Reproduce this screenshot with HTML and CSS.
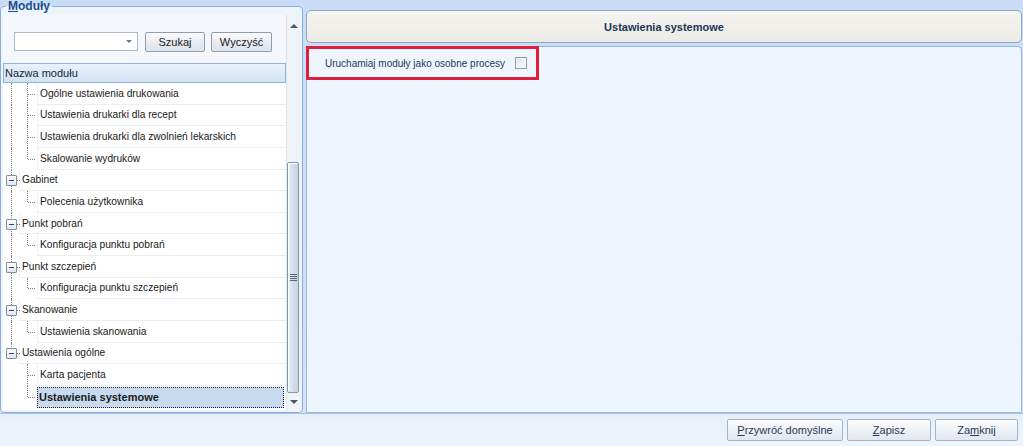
FILE: index.html
```html
<!DOCTYPE html>
<html lang="pl">
<head>
<meta charset="utf-8">
<title>Moduły</title>
<link rel="stylesheet" href="styles.css">
</head>
<body>
<div class="window">
  <div class="main">
    <fieldset class="modgroup">
      <legend><u>M</u>oduły</legend>
      <div class="scrollarea">
        <div class="pane">
          <div class="search">
            <div class="combo"><span class="caret"></span></div>
            <button class="btn btn-szukaj">Szukaj</button>
            <button class="btn btn-wyczysc">Wyczyść</button>
          </div>
          <div class="tree-head">Nazwa modułu</div>
          <div class="tree">
            <div class="row"><span class="ind trunk"></span><span class="ind branch"></span><span class="cell">Ogólne ustawienia drukowania</span></div>
            <div class="row"><span class="ind trunk"></span><span class="ind branch"></span><span class="cell">Ustawienia drukarki dla recept</span></div>
            <div class="row"><span class="ind trunk"></span><span class="ind branch"></span><span class="cell">Ustawienia drukarki dla zwolnień lekarskich</span></div>
            <div class="row"><span class="ind trunk"></span><span class="ind branch last"></span><span class="cell">Skalowanie wydruków</span></div>
            <div class="row node-row"><span class="ind node"><span class="box"></span></span><span class="cell">Gabinet</span></div>
            <div class="row"><span class="ind trunk"></span><span class="ind branch last"></span><span class="cell">Polecenia użytkownika</span></div>
            <div class="row node-row"><span class="ind node"><span class="box"></span></span><span class="cell">Punkt pobrań</span></div>
            <div class="row"><span class="ind trunk"></span><span class="ind branch last"></span><span class="cell">Konfiguracja punktu pobrań</span></div>
            <div class="row node-row"><span class="ind node"><span class="box"></span></span><span class="cell">Punkt szczepień</span></div>
            <div class="row"><span class="ind trunk"></span><span class="ind branch last"></span><span class="cell">Konfiguracja punktu szczepień</span></div>
            <div class="row node-row"><span class="ind node"><span class="box"></span></span><span class="cell">Skanowanie</span></div>
            <div class="row"><span class="ind trunk"></span><span class="ind branch last"></span><span class="cell">Ustawienia skanowania</span></div>
            <div class="row node-row"><span class="ind node end"><span class="box"></span></span><span class="cell">Ustawienia ogólne</span></div>
            <div class="row"><span class="ind blank"></span><span class="ind branch"></span><span class="cell">Karta pacjenta</span></div>
            <div class="row"><span class="ind blank"></span><span class="ind branch last"></span><span class="cell selected">Ustawienia systemowe</span></div>
          </div>
        </div>
        <div class="vscroll">
          <div class="arrow-box up"><span class="tri-up"></span></div>
          <div class="track"><div class="thumb"><span class="grip"></span></div></div>
          <div class="arrow-box down"><span class="tri-down"></span></div>
        </div>
      </div>
    </fieldset>
    <div class="right">
      <div class="title-bar">Ustawienia systemowe</div>
      <div class="content">
        <div class="highlight">
          <span class="opt-label">Uruchamiaj moduły jako osobne procesy</span>
          <span class="checkbox"></span>
        </div>
      </div>
    </div>
  </div>
  <div class="footer">
    <button class="fbtn w-reset"><u>P</u>rzywróć domyślne</button>
    <button class="fbtn w-save"><u>Z</u>apisz</button>
    <button class="fbtn w-close">Za<u>m</u>knij</button>
  </div>
</div>
</body>
</html>
```
FILE: styles.css
```css
html, body {
  margin: 0;
  padding: 0;
}
body {
  font-family: "Liberation Sans", Arial, sans-serif;
  font-size: 11px;
  color: #1a1a1a;
}
.window {
  width: 1023px;
  height: 446px;
  background: linear-gradient(#c8ddf5, #d4e4f7);
  display: flex;
  flex-direction: column;
  overflow: hidden;
}
.main {
  height: 413px;
  display: flex;
  gap: 3px;
}

/* left group */
.modgroup {
  margin: 0;
  padding: 2px 1px 1px 2px;
  border: 1px solid #8aaedc;
  border-radius: 4px;
  width: 303px;
  height: 413px;
  box-sizing: border-box;
  background: #eef4fc;
  min-width: 0;
}
.modgroup legend {
  padding: 0 2px;
  margin-left: 3px;
  font-weight: bold;
  font-size: 12px;
  line-height: 13px;
  color: #1f4f8f;
}
.scrollarea {
  display: flex;
  height: 395px;
}
.pane {
  width: 283px;
  background: #f4f8fc;
  display: flex;
  flex-direction: column;
}
.search {
  display: flex;
  align-items: flex-start;
  padding: 17px 0 0 11px;
  height: 48px;
  box-sizing: border-box;
}
.combo {
  width: 124px;
  height: 19px;
  box-sizing: border-box;
  border: 1px solid #abbacb;
  background: #fff;
  margin-right: 7px;
  display: flex;
  justify-content: flex-end;
  align-items: center;
  padding-right: 5px;
}
.caret {
  width: 0;
  height: 0;
  border-left: 3px solid transparent;
  border-right: 3px solid transparent;
  border-top: 3px solid #6d7a8a;
}
.btn {
  height: 20px;
  box-sizing: border-box;
  border: 1px solid #8d9db2;
  border-radius: 2px;
  background: linear-gradient(#fbfcfd, #e9edf2 50%, #dde3ea);
  font-family: inherit;
  font-size: 11px;
  color: #1a1a1a;
  padding: 0;
}
.btn-szukaj { width: 60px; margin-right: 6px; }
.btn-wyczysc { width: 61px; }

.tree-head {
  height: 20px;
  box-sizing: border-box;
  border: 1px solid #93b2da;
  background: linear-gradient(#e9f1fb, #d3e2f5);
  padding-left: 1px;
  display: flex;
  align-items: center;
  color: #15263b;
}
.tree {
  flex: 1;
  background: #fff;
  font-size: 10.2px;
}
.row {
  height: 21.64px;
  display: flex;
}
.ind {
  position: relative;
  flex: none;
  height: 100%;
}
.trunk, .blank, .node { width: 16px; }
.branch { width: 18px; }
.trunk::before,
.node::before,
.branch::before {
  content: "";
  position: absolute;
  left: 8px;
  top: 0;
  bottom: 0;
  border-left: 1px dotted #808080;
}
.branch.last::before,
.node.end::before {
  bottom: 50%;
}
.branch::after {
  content: "";
  position: absolute;
  left: 9px;
  width: 7px;
  top: 50%;
  border-top: 1px dotted #808080;
}
.node::after {
  content: "";
  position: absolute;
  left: 14px;
  width: 3px;
  top: 50%;
  border-top: 1px dotted #808080;
}
.box {
  position: absolute;
  left: 3px;
  top: 50%;
  margin-top: -5px;
  width: 11px;
  height: 11px;
  box-sizing: border-box;
  border: 1px solid #7b8fab;
  border-radius: 1px;
  background: linear-gradient(#ffffff, #dfe6ef);
  display: flex;
  align-items: center;
  justify-content: center;
  z-index: 1;
}
.box::after {
  content: "";
  width: 5px;
  height: 1px;
  background: #2a4670;
}
.cell {
  flex: 1;
  height: 100%;
  box-sizing: border-box;
  border-bottom: 1px solid #eaedf1;
  border-left: 1px solid #f0f2f5;
  padding-left: 2px;
  display: flex;
  align-items: center;
  white-space: nowrap;
}
.node-row .cell { padding-left: 2px; }
.cell.selected {
  background: #c8daf0;
  border: 1px dotted #222;
  font-weight: bold;
  font-size: 11px;
  margin-right: 2px;
  padding-left: 1px;
  margin-top: 1px;
  height: 21px;
}

/* scrollbar */
.vscroll {
  width: 15px;
  box-sizing: border-box;
  background: #f0f3f7;
  border-left: 1px solid #dfe5ec;
  display: flex;
  flex-direction: column;
}
.arrow-box {
  display: flex;
  justify-content: center;
  padding-right: 1px;
}
.arrow-box.up {
  height: 24px;
  align-items: flex-end;
  padding-bottom: 11px;
  box-sizing: border-box;
}
.arrow-box.down {
  flex: 1;
  align-items: center;
}
.tri-up {
  width: 0; height: 0;
  border-left: 4px solid transparent;
  border-right: 4px solid transparent;
  border-bottom: 4px solid #4a586b;
}
.tri-down {
  width: 0; height: 0;
  border-left: 4px solid transparent;
  border-right: 4px solid transparent;
  border-top: 4px solid #4a586b;
}
.track {
  padding-top: 123px;
}
.thumb {
  width: 12px;
  height: 231px;
  box-sizing: border-box;
  border: 1px solid #8396b2;
  border-radius: 2px;
  background: linear-gradient(to right, #eef2f8, #d5deeb 45%, #c7d2e3);
  box-shadow: inset 1px 1px 0 #fbfcfe;
  display: flex;
  align-items: center;
  justify-content: center;
}
.grip {
  width: 7px;
  height: 7px;
  background: repeating-linear-gradient(#55647a 0 1px, transparent 1px 2px);
}

/* right side */
.right {
  width: 716px;
  display: flex;
  flex-direction: column;
  padding-top: 10px;
  gap: 3px;
}
.title-bar {
  height: 33px;
  box-sizing: border-box;
  border: 1px solid #8aa5c9;
  border-radius: 5px;
  background: linear-gradient(#f5f4f0, #ebeae5);
  display: flex;
  align-items: center;
  justify-content: center;
  font-weight: bold;
  color: #1b3658;
}
.content {
  height: 367px;
  box-sizing: border-box;
  border: 1px solid #9cb7da;
  border-radius: 4px 4px 0 0;
  background: #eef5fd;
}
.highlight {
  margin: -1px 0 0 -1px;
  width: 233px;
  height: 34px;
  box-sizing: border-box;
  border: 3px solid #df1f3e;
  display: flex;
  align-items: center;
  padding-left: 16px;
  gap: 10px;
}
.opt-label {
  color: #1f3a5f;
  white-space: nowrap;
  font-size: 10px;
}
.checkbox {
  flex: none;
  width: 12px;
  height: 12px;
  box-sizing: border-box;
  border: 1px solid #8e9cae;
  background: linear-gradient(135deg, #dfe4ea, #fbfcfd);
  box-shadow: inset 0 0 0 1px #f4f6f8;
}

/* footer */
.footer {
  flex: 1;
  border-top: 1px solid #a6c2e7;
  background: linear-gradient(#e6eff9, #eef4fc);
  display: flex;
  justify-content: flex-end;
  align-items: flex-start;
  gap: 4px;
  padding: 5px 5px 0 0;
}
.fbtn {
  height: 22px;
  box-sizing: border-box;
  border: 1px solid #a3b3c8;
  border-radius: 2px;
  background: linear-gradient(#fcfdfe, #eef1f5 50%, #e2e7ee);
  font-family: inherit;
  font-size: 11px;
  color: #1f3a5e;
  padding: 0;
}
.w-reset { width: 116px; }
.w-save { width: 84px; }
.w-close { width: 83px; }
```
